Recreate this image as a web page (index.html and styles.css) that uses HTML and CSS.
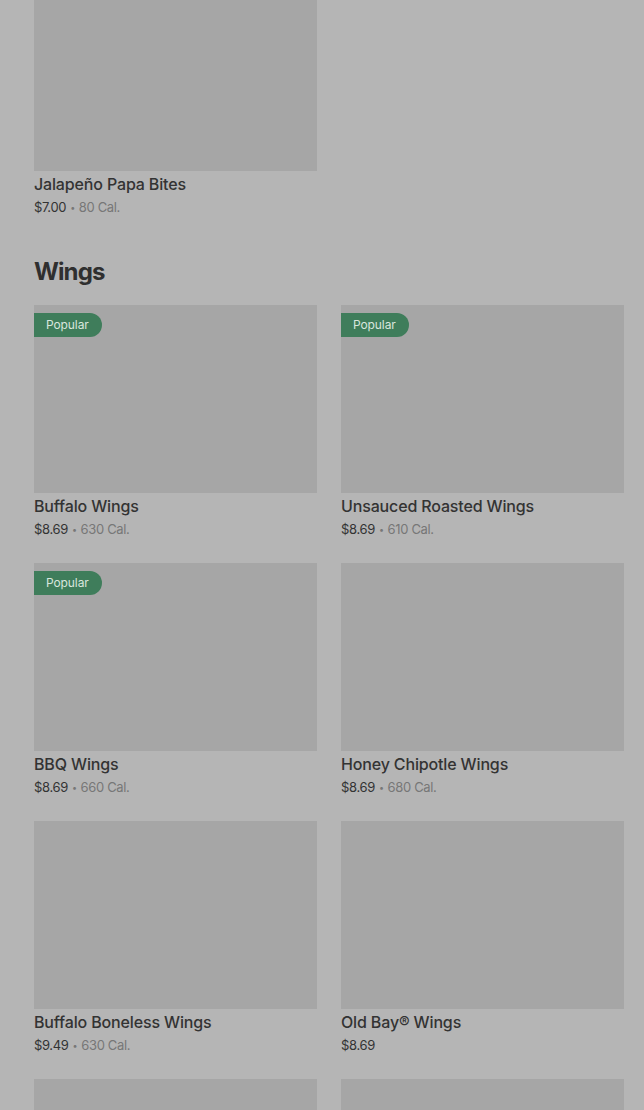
FILE: index.html
```html
<!DOCTYPE html>
<html lang="en">
<head>
<meta charset="utf-8">
<title>Menu</title>
<link rel="stylesheet" href="styles.css">
</head>
<body>
<main class="page">
  <section class="section">
    <div class="grid">
      <article class="card">
        <div class="thumb thumb-top"></div>
        <h3 class="name">Jalapeño Papa Bites</h3>
        <p class="meta"><span class="price">$7.00</span><span class="dot">•</span><span class="cal">80 Cal.</span></p>
      </article>
    </div>
  </section>

  <section class="section">
    <h2 class="heading">Wings</h2>
    <div class="grid">
      <article class="card">
        <div class="thumb"><span class="badge">Popular</span></div>
        <h3 class="name">Buffalo Wings</h3>
        <p class="meta"><span class="price">$8.69</span><span class="dot">•</span><span class="cal">630 Cal.</span></p>
      </article>
      <article class="card">
        <div class="thumb"><span class="badge">Popular</span></div>
        <h3 class="name">Unsauced Roasted Wings</h3>
        <p class="meta"><span class="price">$8.69</span><span class="dot">•</span><span class="cal">610 Cal.</span></p>
      </article>
      <article class="card">
        <div class="thumb"><span class="badge">Popular</span></div>
        <h3 class="name">BBQ Wings</h3>
        <p class="meta"><span class="price">$8.69</span><span class="dot">•</span><span class="cal">660 Cal.</span></p>
      </article>
      <article class="card">
        <div class="thumb"></div>
        <h3 class="name">Honey Chipotle Wings</h3>
        <p class="meta"><span class="price">$8.69</span><span class="dot">•</span><span class="cal">680 Cal.</span></p>
      </article>
      <article class="card">
        <div class="thumb"></div>
        <h3 class="name">Buffalo Boneless Wings</h3>
        <p class="meta"><span class="price">$9.49</span><span class="dot">•</span><span class="cal">630 Cal.</span></p>
      </article>
      <article class="card">
        <div class="thumb"></div>
        <h3 class="name">Old Bay® Wings</h3>
        <p class="meta"><span class="price">$8.69</span></p>
      </article>
      <article class="card">
        <div class="thumb thumb-cut"></div>
      </article>
      <article class="card">
        <div class="thumb thumb-cut"></div>
      </article>
    </div>
  </section>
</main>
</body>
</html>
```
FILE: styles.css
```css
html, body {
  margin: 0;
  padding: 0;
  background: #b5b5b5;
}
body {
  font-family: Inter, "Noto Sans", "Liberation Sans", sans-serif;
  color: #333333;
  overflow: hidden;
  height: 1110px;
}
.page {
  padding: 0 20px 0 34px;
}
.section + .section {
  margin-top: 39px;
}
.heading {
  margin: 0 0 17px;
  font-size: 24px;
  line-height: 32px;
  font-weight: 700;
  letter-spacing: -0.9px;
  color: #2f2f2f;
}
.grid {
  display: grid;
  grid-template-columns: 283px 283px;
  column-gap: 24px;
  row-gap: 24px;
}
.card {
  display: flex;
  flex-direction: column;
}
.thumb {
  position: relative;
  height: 188px;
  background: #a6a6a6;
}
.thumb-top {
  height: 171px;
}
.thumb-cut {
  height: 31px;
}
.badge {
  position: absolute;
  top: 8px;
  left: 0;
  height: 24px;
  line-height: 24px;
  padding: 0 13px 0 12px;
  background: #3f7d5b;
  color: #d9e6de;
  font-size: 12px;
  letter-spacing: -0.1px;
  border-radius: 0 12px 12px 0;
}
.name {
  margin: 2px 0 0;
  font-size: 16px;
  line-height: 22px;
  font-weight: 500;
  letter-spacing: -0.15px;
  color: #333333;
}
.meta {
  margin: 2px 0 0;
  height: 20px;
  font-size: 13px;
  line-height: 20px;
  letter-spacing: -0.35px;
  color: #6e6e6e;
}
.price {
  color: #333333;
}
.dot {
  font-size: 9px;
  line-height: 1;
  margin: 0 4px;
  color: #777777;
  position: relative;
  top: -1px;
}
.cal {
  color: #777777;
}
```
